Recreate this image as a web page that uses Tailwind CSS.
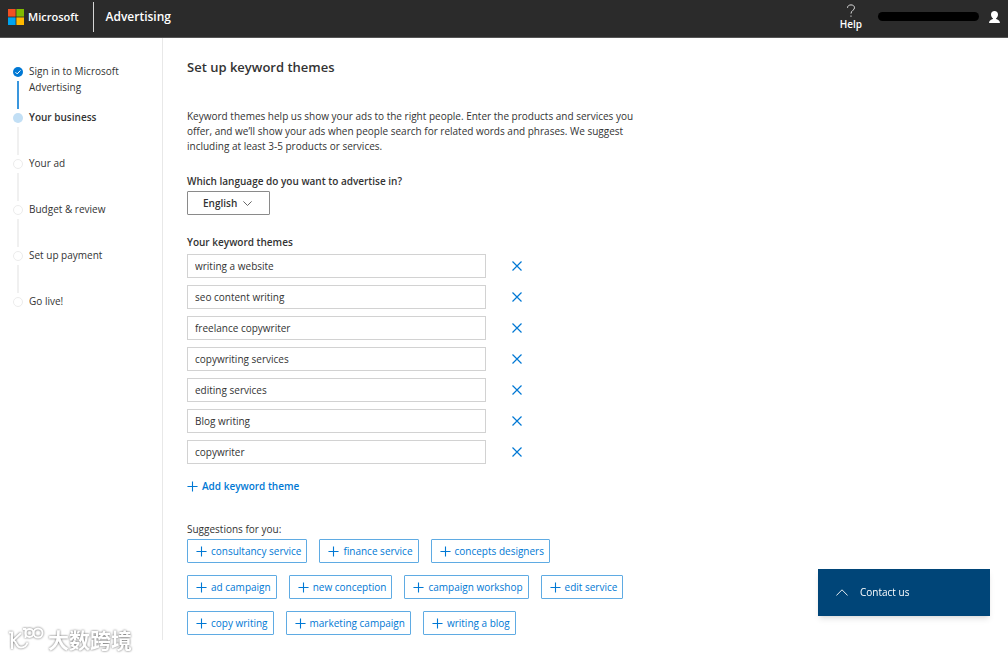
<!DOCTYPE html>
<html lang="en">
<head>
    <meta charset="UTF-8">
    <meta name="viewport" content="width=device-width, initial-scale=1.0">
    <title>Microsoft Advertising - Set up keyword themes</title>
    <script src="https://cdn.jsdelivr.net/npm/@tailwindcss/browser@4"></script>
</head>
<body class="min-h-screen bg-white font-['Open_Sans','Noto_Sans',sans-serif] text-[10px] leading-[15px] text-[#333]">
    <svg class="hidden">
        <symbol id="plus" viewBox="0 0 12 12"><path d="M6 .5v11M.5 6h11" fill="none" stroke="currentColor" stroke-width="1.2"/></symbol>
        <symbol id="cross" viewBox="0 0 10 10"><path d="M.5 .5l9 9M9.5 .5l-9 9" fill="none" stroke="currentColor" stroke-width="1.2"/></symbol>
    </svg>

    <header class="flex h-[38px] items-center border-b border-[#555] bg-[#2b2b2b] pb-1 text-white">
        <a href="#" class="flex items-center gap-1 pl-2 text-[11px] font-semibold">
            <svg class="size-4" viewBox="0 0 16 16">
                <path fill="#f25022" d="M0 0h7.6v7.6H0z"/>
                <path fill="#7fba00" d="M8.4 0H16v7.6H8.4z"/>
                <path fill="#00a4ef" d="M0 8.4h7.6V16H0z"/>
                <path fill="#ffb900" d="M8.4 8.4H16V16H8.4z"/>
            </svg>
            Microsoft
        </a>
        <a href="#" class="ml-3.5 flex h-[30px] items-center border-l border-white/80 pl-3 text-xs font-semibold">Advertising</a>
        <button class="mr-4 ml-auto flex flex-col items-center text-[10px] leading-3 font-semibold">
            <svg class="h-3.5 w-2.5" viewBox="0 0 10 14" fill="none" stroke="#ddd" stroke-width="1">
                <path d="M1.5 3.8C1.5 2 3 .9 5 .9s3.500 1.100 3.500 2.900C8.500 6.400 5 6.200 5 9.600M5 11.500v1.300"/>
            </svg>
            Help
        </button>
        <span class="h-[9px] w-[101px] rounded-full bg-black"></span>
        <button class="mr-2 ml-2.5" aria-label="Account">
            <svg class="h-3 w-[11px]" viewBox="0 0 11 12" fill="#fff">
                <path d="M5.500 0C7.600 0 9 1.400 9 3.400c0 1.700-.8 3.100-1.900 3.900v.7c1.700.5 3.700 1.200 3.900 4H0c.2-2.800 2.200-3.500 3.900-4v-.7C2.800 6.500 2 5.100 2 3.400 2 1.400 3.400 0 5.500 0z"/>
            </svg>
        </button>
    </header>

    <div class="flex">
        <nav class="h-[602px] w-[163px] shrink-0 border-r border-[#e8e8e8] pt-[25px] pl-[13px]">
            <ol class="leading-4">
                <li class="flex h-[46px] gap-1.5">
                    <div class="flex w-2.5 flex-col items-center gap-1 pt-1">
                        <svg class="size-2.5 shrink-0" viewBox="0 0 10 10"><circle cx="5" cy="5" r="5" fill="#0078d4"/><path d="M2.500 5.200l1.700 1.700 3.300-3.500" fill="none" stroke="#fff" stroke-width="1"/></svg>
                        <span class="w-0.5 flex-1 bg-[#3a96dd]"></span>
                    </div>
                    <span class="w-28">Sign in to Microsoft Advertising</span>
                </li>
                <li class="flex h-[46px] gap-1.5">
                    <div class="flex w-2.5 flex-col items-center gap-1 pt-1">
                        <span class="size-2.5 shrink-0 rounded-full bg-[#c2dff5]"></span>
                        <span class="w-0.5 flex-1 bg-[#f0f0f0]"></span>
                    </div>
                    <span class="font-semibold">Your business</span>
                </li>
                <li class="flex h-[46px] gap-1.5">
                    <div class="flex w-2.5 flex-col items-center gap-1 pt-1">
                        <span class="size-2.5 shrink-0 rounded-full border border-[#ececec]"></span>
                        <span class="w-0.5 flex-1 bg-[#f0f0f0]"></span>
                    </div>
                    <span>Your ad</span>
                </li>
                <li class="flex h-[46px] gap-1.5">
                    <div class="flex w-2.5 flex-col items-center gap-1 pt-1">
                        <span class="size-2.5 shrink-0 rounded-full border border-[#ececec]"></span>
                        <span class="w-0.5 flex-1 bg-[#f0f0f0]"></span>
                    </div>
                    <span>Budget &amp; review</span>
                </li>
                <li class="flex h-[46px] gap-1.5">
                    <div class="flex w-2.5 flex-col items-center gap-1 pt-1">
                        <span class="size-2.5 shrink-0 rounded-full border border-[#ececec]"></span>
                        <span class="w-0.5 flex-1 bg-[#f0f0f0]"></span>
                    </div>
                    <span>Set up payment</span>
                </li>
                <li class="flex gap-1.5">
                    <div class="flex w-2.5 flex-col items-center pt-1">
                        <span class="size-2.5 shrink-0 rounded-full border border-[#ececec]"></span>
                    </div>
                    <span>Go live!</span>
                </li>
            </ol>
        </nav>

        <main class="flex-1 pt-5 pl-6">
            <h1 class="text-[13px] leading-[18px] font-semibold">Set up keyword themes</h1>
            <p class="mt-[33px] max-w-[448px]">Keyword themes help us show your ads to the right people. Enter the products and services you offer, and we’ll show your ads when people search for related words and phrases. We suggest including at least 3-5 products or services.</p>

            <label for="language" class="mt-5 block font-semibold">Which language do you want to advertise in?</label>
            <div class="relative mt-0.5 w-[83px]">
                <select id="language" class="block h-6 w-full appearance-none rounded-[1px] border border-[#8a8a8a] bg-white pl-[15px] font-semibold">
                    <option>English</option>
                </select>
                <svg class="pointer-events-none absolute top-2.5 right-[18px] h-[5px] w-[9px]" viewBox="0 0 9 5"><path d="M.4 .4l4.100 4.100L8.600 .4" fill="none" stroke="#555" stroke-width=".9"/></svg>
            </div>

            <h2 class="mt-5 font-semibold">Your keyword themes</h2>
            <ul id="themes" class="mt-1 flex flex-col gap-[7px]"></ul>

            <button class="mt-[15px] flex items-center gap-1 font-semibold text-[#0078d4]">
                <svg class="size-[11px]"><use href="#plus"/></svg>Add keyword theme
            </button>

            <h2 class="mt-7 font-medium">Suggestions for you:</h2>
            <div id="suggestions" class="mt-0.5 flex max-w-[448px] flex-wrap gap-3"></div>
        </main>
    </div>

    <button class="fixed right-[18px] bottom-[41px] flex h-[47px] w-[172px] items-center gap-3 bg-[#004578] pl-[18px] font-medium text-white shadow-md">
        <svg class="h-[7px] w-3" viewBox="0 0 12 7"><path d="M.4 6.500L6 .8l5.600 5.700" fill="none" stroke="#fff" stroke-width=".9"/></svg>
        Contact us
    </button>

    <div class="fixed bottom-1.5 left-2 flex items-center gap-1 text-white drop-shadow-[0_0_1px_#666]">
        <svg class="h-6 w-9" viewBox="0 0 36 24" fill="none" stroke="#fff" stroke-width="2">
            <path d="M1 5.500h3V22M13 6L5 13.500c4 0 2.500 7 8 7 3.500 0 5.500-2 6.500-5"/>
            <path d="M15 2h2.500v9"/><circle cx="21.500" cy="6" r="4"/><circle cx="30" cy="6" r="4.500"/>
        </svg>
        <span class="font-['Noto_Sans_CJK_SC',sans-serif] text-[21px] leading-6 font-bold" lang="zh">大数跨境</span>
    </div>

    <script>
        const themes = ['writing a website', 'seo content writing', 'freelance copywriter', 'copywriting services', 'editing services', 'Blog writing', 'copywriter'];
        const suggestions = ['consultancy service', 'finance service', 'concepts designers', 'ad campaign', 'new conception', 'campaign workshop', 'edit service', 'copy writing', 'marketing campaign', 'writing a blog'];

        document.getElementById('themes').innerHTML = themes.map((theme, i) => `
            <li class="flex items-center">
                <input type="text" aria-label="Keyword theme ${i + 1}" value="${theme}" class="h-6 w-[299px] border border-[#d2d2d2] px-[7px]">
                <button class="ml-[26px] text-[#0078d4]" aria-label="Remove ${theme}"><svg class="size-2.5"><use href="#cross"/></svg></button>
            </li>
        `).join('');

        document.getElementById('suggestions').innerHTML = suggestions.map(name => `
            <button class="flex h-6 items-center gap-1 rounded-[1px] border border-[#5fabe3] pr-[5px] pl-2 text-[#0078d4]">
                <svg class="size-[11px]"><use href="#plus"/></svg>${name}
            </button>
        `).join('');
    </script>
</body>
</html>
